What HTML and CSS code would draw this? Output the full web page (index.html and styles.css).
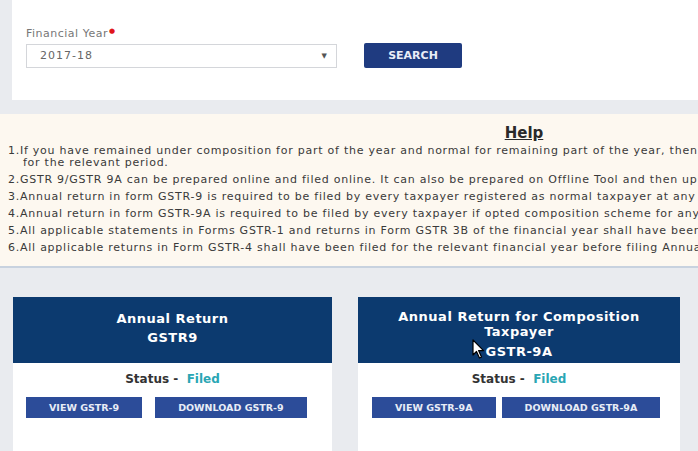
FILE: index.html
```html
<!DOCTYPE html>
<html lang="en">
<head>
    <meta charset="UTF-8">
    <meta name="viewport" content="width=device-width, initial-scale=1.0">
    <title>Annual Return</title>
    <link rel="stylesheet" href="styles.css">
</head>
<body>
    <div class="page">
        <div class="search-panel">
            <label class="field-label">Financial Year<span class="req">&#9679;</span></label>
            <div class="search-row">
                <div class="select-box">
                    <span>2017-18</span>
                    <span class="caret">&#9660;</span>
                </div>
                <button class="btn-search">SEARCH</button>
            </div>
        </div>

        <div class="help">
            <h3 class="help-title">Help</h3>
            <p class="help-item">1.If you have remained under composition for part of the year and normal for remaining part of the year, then<br>for the relevant period.</p>
            <p class="help-item">2.GSTR 9/GSTR 9A can be prepared online and filed online. It can also be prepared on Offline Tool and then upload it to the GST Portal.</p>
            <p class="help-item">3.Annual return in form GSTR-9 is required to be filed by every taxpayer registered as normal taxpayer at any time during the year.</p>
            <p class="help-item">4.Annual return in form GSTR-9A is required to be filed by every taxpayer if opted composition scheme for any period during the year.</p>
            <p class="help-item">5.All applicable statements in Forms GSTR-1 and returns in Form GSTR 3B of the financial year shall have been filed before filing.</p>
            <p class="help-item">6.All applicable returns in Form GSTR-4 shall have been filed for the relevant financial year before filing Annual Return.</p>
        </div>

        <div class="cards">
            <div class="card card-first">
                <div class="card-head">
                    <div>Annual Return</div>
                    <div>GSTR9</div>
                </div>
                <div class="card-body">
                    <div class="status">Status - &nbsp;<span class="filed">Filed</span></div>
                    <div class="actions">
                        <button class="btn-small">VIEW GSTR-9</button>
                        <button class="btn-small">DOWNLOAD GSTR-9</button>
                    </div>
                </div>
            </div>
            <div class="card card-second">
                <div class="card-head card-head-tall">
                    <div>Annual Return for Composition</div>
                    <div>Taxpayer</div>
                    <div class="code">GSTR-9A</div>
                    <svg class="cursor" width="14" height="21" viewBox="0 0 14 21">
                        <path d="M1 1 L1 16 L4.5 12.5 L7.5 19 L9.5 18 L6.6 11.6 L11.5 11.6 Z" fill="#fff" stroke="#000" stroke-width="1.2" stroke-linejoin="round"/>
                    </svg>
                </div>
                <div class="card-body">
                    <div class="status">Status - &nbsp;<span class="filed">Filed</span></div>
                    <div class="actions actions-tight">
                        <button class="btn-small">VIEW GSTR-9A</button>
                        <button class="btn-small">DOWNLOAD GSTR-9A</button>
                    </div>
                </div>
            </div>
        </div>
    </div>
</body>
</html>
```

FILE: styles.css
```css
body {
    margin: 0;
    background-color: #e9ebef;
    font-family: "DejaVu Sans", Verdana, sans-serif;
    overflow: hidden;
}
.page {
    width: 1040px;
}
.search-panel {
    margin-left: 12px;
    height: 100px;
    box-sizing: border-box;
    background-color: #fff;
    padding: 27px 0 0 14px;
}
.field-label {
    display: block;
    font-size: 11px;
    letter-spacing: 0.5px;
    color: #777;
    margin-bottom: 3px;
}
.req {
    color: #e0151b;
    font-size: 7px;
    vertical-align: 4px;
    margin-left: 1px;
}
.search-row {
    display: flex;
    align-items: center;
    gap: 27px;
}
.select-box {
    width: 311px;
    height: 24px;
    box-sizing: border-box;
    border: 1px solid #d4d6da;
    display: flex;
    align-items: center;
    justify-content: space-between;
    padding: 0 8px 0 13px;
    font-size: 11px;
    letter-spacing: 1px;
    color: #666;
}
.caret {
    font-size: 7px;
    color: #555;
}
.btn-search {
    width: 98px;
    height: 25px;
    background-color: #1f3b80;
    color: #e9edf7;
    border: none;
    border-radius: 2px;
    font-family: "DejaVu Sans", sans-serif;
    font-weight: bold;
    font-size: 11px;
}
.help {
    margin-top: 14px;
    height: 154px;
    box-sizing: border-box;
    background-color: #fdf8f0;
    border-bottom: 2px solid #c8d2df;
    padding: 12px 0 0 8px;
    white-space: nowrap;
    color: #3a3a3a;
}
.help-title {
    margin: 0 0 4px 0;
    text-align: center;
    font-size: 15px;
    text-decoration: underline;
    color: #2a2a2a;
    line-height: 15px;
}
.help-item {
    margin: 0 0 5px 0;
    font-size: 11px;
    letter-spacing: 0.75px;
    line-height: 12px;
    padding-left: 15px;
    text-indent: -15px;
}
.cards {
    display: flex;
    gap: 26px;
    padding: 29px 0 0 13px;
}
.card {
    background-color: #fff;
    height: 200px;
}
.card-first {
    width: 319px;
}
.card-second {
    width: 322px;
}
.card-head {
    position: relative;
    height: 66px;
    box-sizing: border-box;
    background-color: #0c3a6f;
    color: #fff;
    font-weight: bold;
    font-size: 13px;
    letter-spacing: 0.5px;
    text-align: center;
    padding-top: 12px;
    line-height: 19px;
}
.card-head-tall {
    line-height: 15px;
}
.card-head-tall .code {
    margin-top: 5px;
}
.cursor {
    position: absolute;
    left: 114px;
    top: 42px;
}
.card-body {
    padding-top: 9px;
}
.status {
    text-align: center;
    font-size: 12px;
    font-weight: bold;
    color: #333;
    margin-bottom: 11px;
}
.filed {
    color: #2aa6b4;
}
.actions {
    display: flex;
    gap: 13px;
    padding-left: 13px;
}
.actions-tight {
    gap: 6px;
    padding-left: 14px;
}
.btn-small {
    height: 21px;
    padding: 0 23px;
    background-color: #2c4c99;
    color: #e8ecf6;
    border: none;
    font-family: "DejaVu Sans", sans-serif;
    font-weight: bold;
    font-size: 9.5px;
}
```
